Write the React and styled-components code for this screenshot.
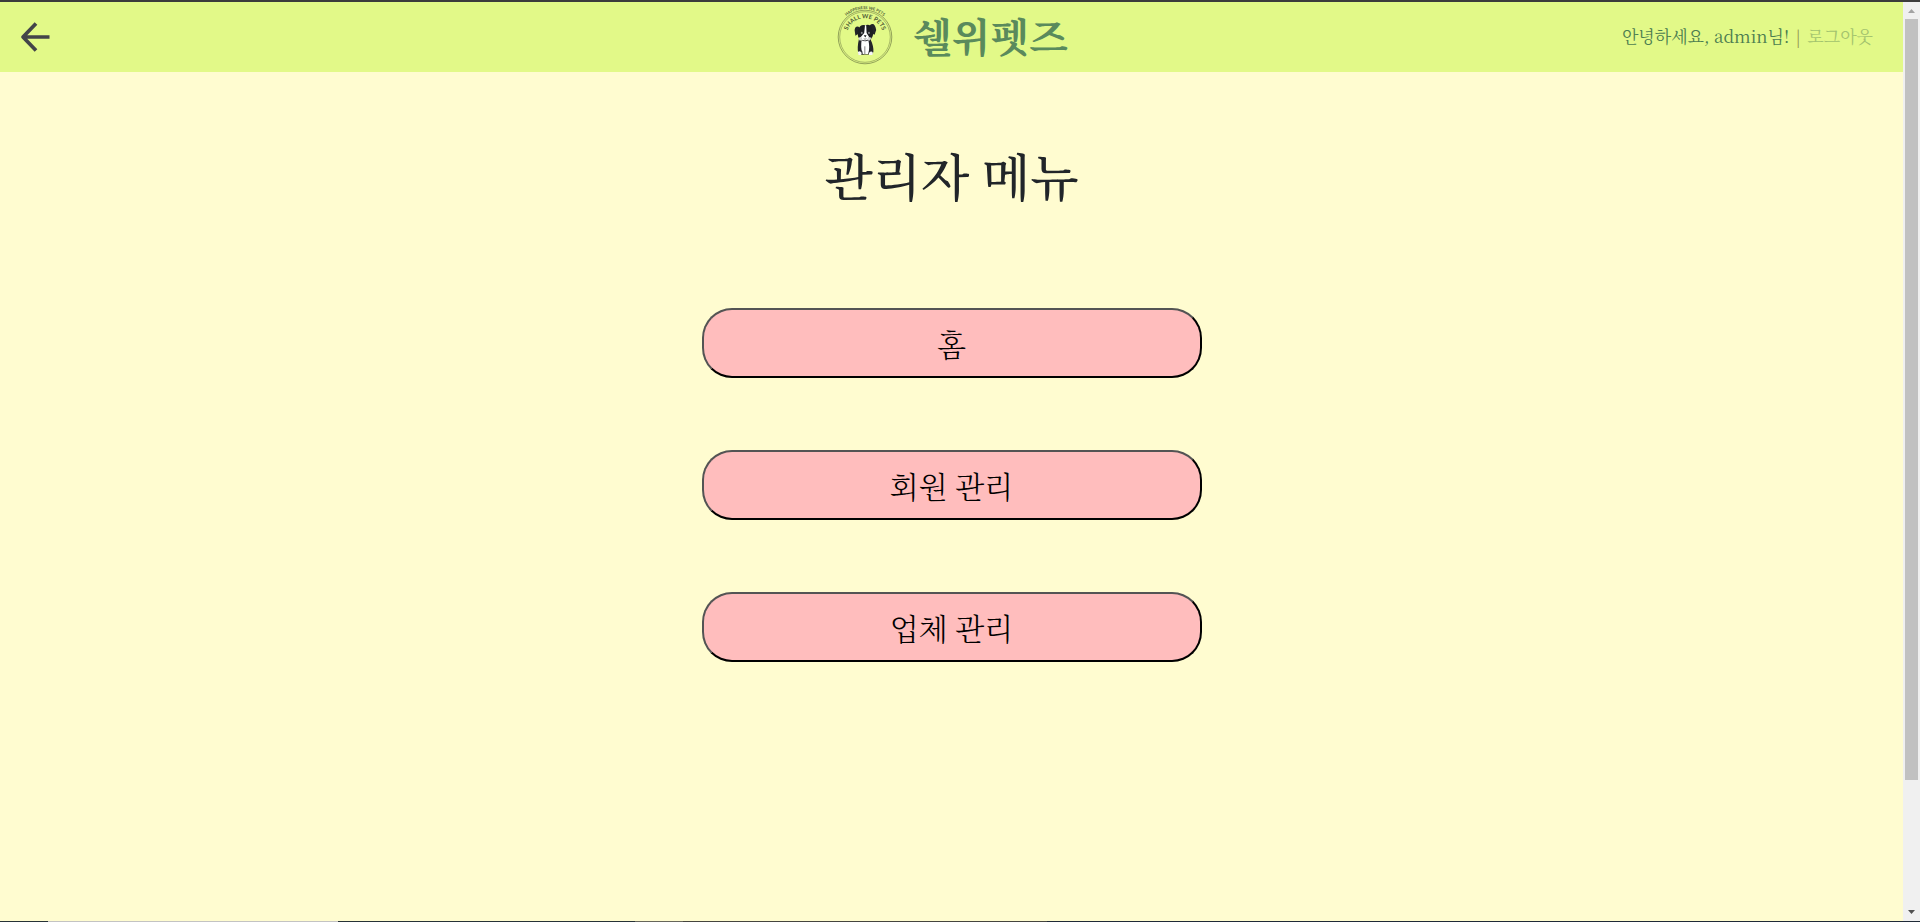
import React from "react";
import styled, { createGlobalStyle } from "styled-components";

const GlobalStyle = createGlobalStyle`
  * { box-sizing: border-box; }
  body {
    margin: 0;
    background: #fffcd0;
    font-family: "Noto Serif CJK KR", "Noto Sans CJK KR", serif;
    color: #212529;
  }
`;

const Frame = styled.div`
  display: flex;
  flex-direction: column;
  height: 100vh;
`;

const TopEdge = styled.div`
  height: 2px;
  background: #3c3c3c;
`;

const Viewport = styled.div`
  flex: 1;
  min-height: 0;
  display: flex;
`;

const Page = styled.div`
  flex: 1;
  min-width: 0;
  background: #fffcd0;
`;

const Header = styled.header`
  display: grid;
  grid-template-columns: 1fr auto 1fr;
  align-items: center;
  height: 70px;
  padding: 0 20px;
  background: #e2f988;
  color: #5a8a5c;
`;

const BackButton = styled.button`
  justify-self: start;
  display: flex;
  padding: 0;
  border: 0;
  background: none;
  color: #434449;
  cursor: pointer;
`;

const Brand = styled.a`
  display: flex;
  align-items: center;
  gap: 18px;
  color: inherit;
  font-size: 40px;
  line-height: 56px;
  font-weight: 700;
  text-decoration: none;
`;

const BrandName = styled.span`
  padding-bottom: 4px;
`;

const Account = styled.p`
  justify-self: end;
  margin: 0;
  padding: 0 10px 2px 0;
  color: #4c7d50;
  font-size: 17px;
  line-height: 24px;
  font-weight: 400;
`;

const Divider = styled.span`
  margin: 0 2px;
  color: #8d8a4c;
`;

const LogoutLink = styled.a`
  color: #a3c36e;
  text-decoration: none;
`;

const Main = styled.main`
  display: flex;
  flex-direction: column;
  align-items: center;
  padding-top: 66px;
`;

const Title = styled.h1`
  margin: 0 0 98px;
  font-size: 50px;
  line-height: 72px;
  font-weight: 500;
`;

const Menu = styled.nav`
  display: flex;
  flex-direction: column;
  gap: 72px;
  width: 500px;
  max-width: 90%;
`;

const MenuButton = styled.button`
  height: 70px;
  padding: 0;
  border: 2px outset #000;
  border-radius: 30px;
  background: #ffbdbd;
  color: #000;
  font-family: inherit;
  font-size: 30px;
  font-weight: 300;
  cursor: pointer;
`;

const ScrollTrack = styled.div`
  display: flex;
  flex-direction: column;
  align-items: center;
  width: 17px;
  background: #f0f0f0;
`;

const ScrollArrow = styled.svg`
  flex: none;
  width: 17px;
  height: 17px;
  fill: ${(p) => p.$color};
`;

const ScrollBody = styled.div`
  flex: 1;
  width: 13px;
`;

const ScrollThumb = styled.div`
  height: 86%;
  background: #c1c1c1;
`;

const BottomEdge = styled.div`
  display: flex;
  height: 1px;
  background: #263238;
`;

const EdgePart = styled.div`
  flex: ${(p) => p.$size};
  background: ${(p) => p.$color};
`;

const LogoArt = styled.svg`
  overflow: visible;
`;

function Logo() {
  return (
    <LogoArt width="60" height="60" viewBox="0 0 60 60" aria-hidden="true">
      <defs>
        <path id="outerArc" d="M2 30A28 28 0 0 1 58 30" />
        <path id="innerArc" d="M12 34A18.500 18.500 0 1 1 48 34" />
      </defs>
      <g fill="none" stroke="#7d8d4c">
        <circle cx="30" cy="30" r="26.800" strokeWidth=".8" />
        <circle cx="30" cy="30" r="25.300" strokeWidth=".6" />
      </g>
      <g fill="#4c5834" fontFamily="Lato, sans-serif" textAnchor="middle">
        <text fontSize="4">
          <textPath href="#outerArc" startOffset="50%">HAPPENESS WE PETS</textPath>
        </text>
        <text fontSize="6" fontWeight="700">
          <textPath href="#innerArc" startOffset="50%">SHALL WE PETS</textPath>
        </text>
      </g>
      <g transform="translate(6 -1) scale(.8 .96)">
        <path d="M22.500 34Q20 43 21.500 49Q24 51.500 29 50.500H35Q39 51.500 40.500 48Q41 42 37 35Z" fill="#24252a" />
        <path d="M26 35Q24 43 27 50H34Q36.500 43 34 35Q30 32 26 35Z" fill="#fff" />
        <path d="M29.800 42V50M25 46Q27 47 26.500 50" stroke="#333" strokeWidth=".7" fill="none" />
        <path d="M23 22Q18 20 17 25L18 31L23 28ZM36 20Q42 16 44 25L42 30L37 28Z" fill="#222328" />
        <path d="M22 24Q24 19 30 20Q37 18 39 24Q42 31 37 35Q30 39 23 34Q19 30 22 24Z" fill="#1d1e22" />
        <path d="M30 20L31.500 20L32 28L35 32Q34 36 30 36Q25 36 25 32L29 28Z" fill="#fff" />
        <path d="M22 33L25 32L27 36L23 36ZM34 32L38 33L36 36L33 36Z" fill="#d7d7d7" />
        <circle cx="26" cy="28" r="1.200" fill="#87888c" />
        <circle cx="35" cy="28" r="1.200" fill="#87888c" />
        <path d="M28.500 30.500H32L30.300 32.800ZM28 34Q30 35.500 32.500 34" fill="#18191c" />
        <path d="M21 48Q24 46 26 49L25 51H22ZM35 49Q38 46 40 49L39 51H35Z" fill="#f6f6f6" />
      </g>
    </LogoArt>
  );
}

const menuItems = ["홈", "회원 관리", "업체 관리"];

export default function App() {
  return (
    <Frame>
      <GlobalStyle />
      <TopEdge />
      <Viewport>
        <Page>
          <Header>
            <BackButton type="button" aria-label="뒤로 가기">
              <svg width="32" height="32" viewBox="0 0 32 32" fill="none" stroke="currentColor" strokeWidth="3.700">
                <path d="M16 2.500L3 16L16 29.500M3 16H29.500" strokeLinejoin="round" />
              </svg>
            </BackButton>
            <Brand href="#">
              <Logo />
              <BrandName>쉘위펫즈</BrandName>
            </Brand>
            <Account>
              안녕하세요, admin님! <Divider>|</Divider> <LogoutLink href="#">로그아웃</LogoutLink>
            </Account>
          </Header>
          <Main>
            <Title>관리자 메뉴</Title>
            <Menu>
              {menuItems.map((label) => (
                <MenuButton key={label} type="button">{label}</MenuButton>
              ))}
            </Menu>
          </Main>
        </Page>
        <ScrollTrack aria-hidden="true">
          <ScrollArrow $color="#a3a3a3" viewBox="0 0 17 17"><path d="M5 11L8.500 7L12 11Z" /></ScrollArrow>
          <ScrollBody><ScrollThumb /></ScrollBody>
          <ScrollArrow $color="#505050" viewBox="0 0 17 17"><path d="M5 6L8.500 10L12 6Z" /></ScrollArrow>
        </ScrollTrack>
      </Viewport>
      <BottomEdge>
        <EdgePart $size={36} $color="#263238" />
        <EdgePart $size={216} $color="#c3c3c3" />
        <EdgePart $size={221} $color="#263238" />
        <EdgePart $size={36} $color="#66665c" />
        <EdgePart $size={271} $color="#45453f" />
        <EdgePart $size={650} $color="#1f2a38" />
      </BottomEdge>
    </Frame>
  );
}
